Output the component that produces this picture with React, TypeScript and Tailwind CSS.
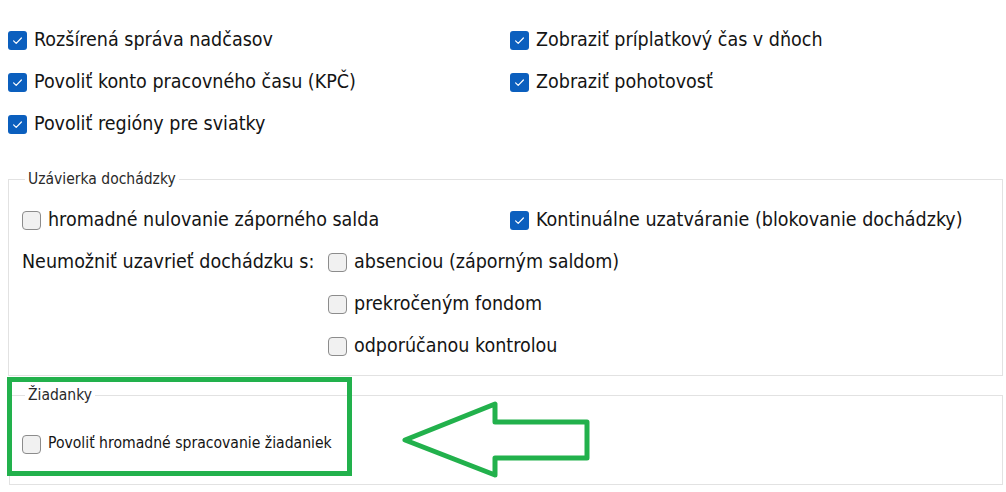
import React from "react";

const font = {
  fontFamily: '"DejaVu Sans Condensed", "DejaVu Sans", Verdana, sans-serif',
};

function Box({ checked }: { checked?: boolean }) {
  if (checked) {
    return (
      <span className="flex h-[19px] w-[19px] shrink-0 items-center justify-center rounded-[3px] bg-[#0b5fbe]">
        <svg width="19" height="19" viewBox="0 0 19 19" fill="none">
          <path
            d="M5.6 9.8 L8.2 12.4 L13.4 7"
            stroke="#ffffff"
            strokeWidth="1.2"
            strokeLinecap="round"
            strokeLinejoin="round"
          />
        </svg>
      </span>
    );
  }
  return (
    <span className="h-[19px] w-[19px] shrink-0 rounded-[4px] border border-[#8c8c8c] bg-[#f1f1f1]" />
  );
}

function Check({
  label,
  checked,
  small,
}: {
  label: string;
  checked?: boolean;
  small?: boolean;
}) {
  return (
    <div className="flex h-[42px] items-center">
      <Box checked={checked} />
      <span
        className={
          small
            ? "ml-[7px] text-[15.6px] text-[#141414]"
            : "ml-[7px] text-[19.5px] text-[#141414]"
        }
      >
        {label}
      </span>
    </div>
  );
}

export default function App() {
  return (
    <div className="relative h-[492px] w-[1006px] overflow-hidden bg-white" style={font}>
      {/* horní volby */}
      <div className="grid grid-cols-[502px_1fr] pl-2 pt-[19px]">
        <div>
          <Check checked label="Rozšírená správa nadčasov" />
          <Check checked label="Povoliť konto pracovného času (KPČ)" />
          <Check checked label="Povoliť regióny pre sviatky" />
        </div>
        <div>
          <Check checked label="Zobraziť príplatkový čas v dňoch" />
          <Check checked label="Zobraziť pohotovosť" />
        </div>
      </div>

      <fieldset className="ml-2 mr-[3px] mt-[24px] border border-[#e2e2e2] pb-[8px] pl-[13px]">
        <legend className="ml-[3px] px-[3px] text-[15.5px] leading-[20px] text-[#2a2a2a]">
          Uzávierka dochádzky
        </legend>
        <div className="pt-[10px]">
          <div className="grid grid-cols-[488px_1fr]">
            <Check label="hromadné nulovanie záporného salda" />
            <Check checked label="Kontinuálne uzatváranie (blokovanie dochádzky)" />
          </div>
          <div className="grid grid-cols-[306px_1fr]">
            <div className="flex h-[42px] items-center text-[19.5px] text-[#141414]">
              Neumožniť uzavrieť dochádzku s:
            </div>
            <div>
              <Check label="absenciou (záporným saldom)" />
              <Check label="prekročeným fondom" />
              <Check label="odporúčanou kontrolou" />
            </div>
          </div>
        </div>
      </fieldset>

      <fieldset className="ml-[9px] mr-[3px] mt-[9px] border border-[#e2e2e2] pb-[19px] pl-[12px]">
        <legend className="ml-[3px] px-[3px] text-[15.5px] leading-[20px] text-[#2a2a2a]">
          Žiadanky
        </legend>
        <div className="pt-[18px]">
          <Check small label="Povoliť hromadné spracovanie žiadaniek" />
        </div>
      </fieldset>

      {/* zvýraznenie */}
      <div className="pointer-events-none absolute left-[7px] top-[377px] h-[99px] w-[345px] border-[5px] border-[#22b14c]" />
      <svg
        className="pointer-events-none absolute left-0 top-0"
        width="1006"
        height="492"
        viewBox="0 0 1006 492"
        fill="none"
      >
        <path
          d="M405 440 L495 404 L495 422 L587 422 L587 458 L495 458 L495 475 Z"
          stroke="#22b14c"
          strokeWidth="5"
          strokeLinejoin="round"
        />
      </svg>
    </div>
  );
}
